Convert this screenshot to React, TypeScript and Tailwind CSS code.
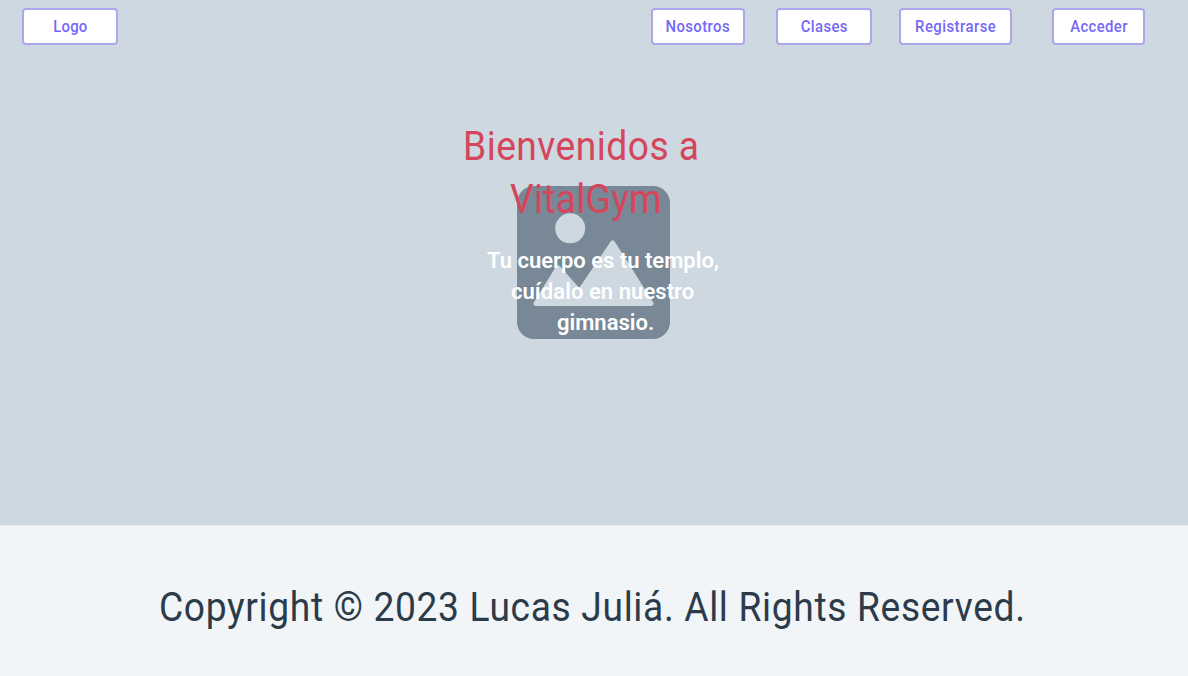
import React from "react";

function NavButton({ children, className }: { children: React.ReactNode; className: string }) {
  return (
    <button
      type="button"
      className={`box-border flex h-[37px] shrink-0 items-center justify-center rounded-[4px] border-2 border-[#aaa7ea] bg-white text-[16px] font-medium leading-5 text-[#7567f8] ${className}`}
    >
      <span className="inline-block scale-x-[0.93]">{children}</span>
    </button>
  );
}

function ImagePlaceholder() {
  return (
    <svg viewBox="0 0 153 153" className="mt-[186px] ml-[517px] h-[153px] w-[153px]" aria-hidden="true">
      <rect width="153" height="153" rx="17" fill="#788896" />
      <circle cx="53.2" cy="42.3" r="15" fill="#ced8e1" />
      <path
        d="M19 117.5L41 82L62.5 106L95.7 57L134 117.5Z"
        fill="#ced8e1"
        stroke="#ced8e1"
        strokeWidth="5"
        strokeLinejoin="round"
      />
    </svg>
  );
}

export default function App() {
  return (
    <div className="flex h-[676px] w-[1188px] flex-col overflow-hidden bg-[#f1f5f8] font-['Roboto','Liberation_Sans',sans-serif]">
      <section className="grid h-[525px] shrink-0 bg-[#ced8e1]">
        <div className="col-start-1 row-start-1">
          <ImagePlaceholder />
        </div>
        <div className="z-10 col-start-1 row-start-1 flex flex-col">
          <header className="flex h-[53px] items-start pt-2 pl-[22px]">
            <NavButton className="w-24 tracking-[0.2px]">Logo</NavButton>
            <nav className="ml-[533px] flex">
              <NavButton className="w-[94px] tracking-[0.45px]">Nosotros</NavButton>
              <NavButton className="ml-[31px] w-24 tracking-[0.4px]">Clases</NavButton>
              <NavButton className="ml-[27px] w-[113px] tracking-[0.5px]">Registrarse</NavButton>
              <NavButton className="ml-[40px] w-[93px] tracking-[0.4px]">Acceder</NavButton>
            </nav>
          </header>
          <h1 className="mt-[67px] flex flex-col items-start whitespace-nowrap text-[40px] font-normal leading-[53px] text-[#d5455c]">
            <span className="ml-[463px] origin-left scale-x-[0.93] tracking-[0.5px]">Bienvenidos a</span>
            <span className="ml-[510px] origin-left scale-x-[0.93] tracking-[0.3px]">VitalGym</span>
          </h1>
          <p className="mt-[19px] flex flex-col items-start whitespace-nowrap text-[22px] font-semibold leading-[31px] text-white">
            <span className="ml-[487px]">Tu cuerpo es tu templo,</span>
            <span className="ml-[511px] tracking-[0.06px]">cuídalo en nuestro</span>
            <span className="ml-[557px]">gimnasio.</span>
          </p>
        </div>
      </section>
      <footer className="flex flex-1 items-start border-t border-[#e7edf3] bg-[#f1f5f8] pt-[55px] pl-[159px]">
        <p className="origin-left scale-x-[0.93] whitespace-nowrap text-[40px] leading-[53px] tracking-[0.7px] text-[#2c3b49]">
          Copyright © 2023 Lucas Juliá. All Rights Reserved.
        </p>
      </footer>
    </div>
  );
}
